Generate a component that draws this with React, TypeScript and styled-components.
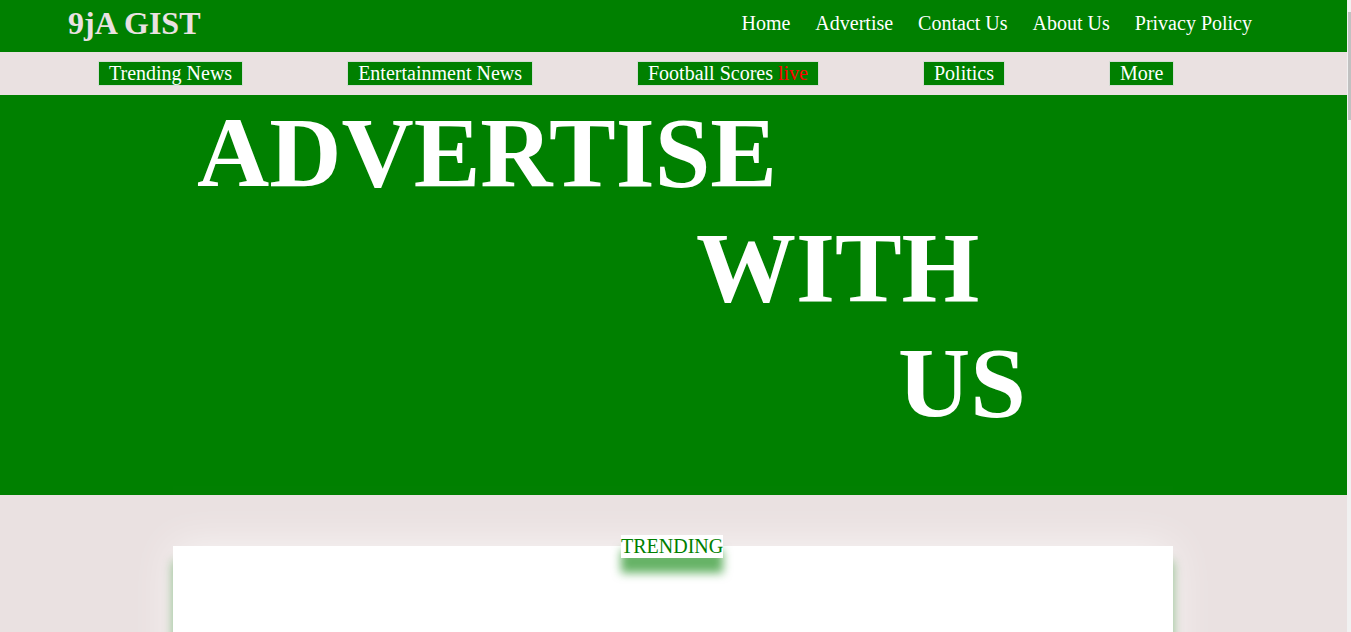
import React from "react";
import styled, { createGlobalStyle } from "styled-components";

const GREEN = "#008000";
const BLUSH = "#eae1e1";

const Global = createGlobalStyle`
  html, body {
    margin: 0;
    padding: 0;
    background: ${BLUSH};
    font-family: "Liberation Serif", "Times New Roman", serif;
  }
  #root {
    margin-right: 4px;
  }
`;

const ScrollRail = styled.div`
  position: fixed;
  top: 0;
  right: 0;
  width: 4px;
  height: 100vh;
  background: #f1f1f1;
  z-index: 10;
`;

const ScrollThumb = styled.div`
  margin: 12px 0 0 1px;
  width: 3px;
  height: 108px;
  background: #c1c1c1;
`;

const Header = styled.header`
  display: flex;
  justify-content: space-between;
  align-items: flex-start;
  height: 52px;
  padding: 0 95px 0 68px;
  background: ${GREEN};
  box-sizing: border-box;
`;

const Logo = styled.h1`
  margin: 5px 0 0;
  font-size: 32px;
  font-weight: bold;
  color: ${BLUSH};
  line-height: normal;
`;

const Nav = styled.nav`
  display: flex;
  gap: 25px;
  margin-top: 12px;
`;

const NavLink = styled.a`
  color: #fff;
  font-size: 20px;
  text-decoration: none;
  line-height: normal;
`;

const CategoryBar = styled.div`
  display: flex;
  align-items: flex-start;
  gap: 104px;
  height: 43px;
  padding: 9px 0 0 98px;
  box-sizing: border-box;
  background: ${BLUSH};
`;

const Category = styled.a`
  background: ${GREEN};
  color: #fff;
  font-size: 20px;
  line-height: normal;
  padding: 0 10px;
  border: 1px solid #d4ddd4;
  text-decoration: none;
  white-space: nowrap;
`;

const Live = styled.span`
  color: #ff0000;
`;

const Hero = styled.section`
  display: flex;
  flex-direction: column;
  height: 400px;
  background: ${GREEN};
`;

const HeroLine = styled.div<{ $indent: number }>`
  padding-left: ${(p) => p.$indent}px;
  color: #fff;
  font-size: 100px;
  font-weight: bold;
  line-height: normal;
`;

const Main = styled.main`
  display: flex;
  justify-content: center;
  padding: 51px 1px 0 0;
  background: ${BLUSH};
`;

const Card = styled.div`
  position: relative;
  width: 1000px;
  height: 3000px;
  background: #fff;
  box-shadow: 0 15px 10px rgba(0, 128, 0, 0.42), 0 0 40px rgba(255, 255, 255, 0.7);
`;

const SectionLabel = styled.div`
  position: absolute;
  top: -11px;
  left: 448px;
  background: #fff;
  color: ${GREEN};
  font-size: 20px;
  line-height: 23px;
  box-shadow: 0 15px 10px rgba(0, 128, 0, 0.6);
`;

export default function App() {
  return (
    <>
      <Global />
      <Header>
        <Logo>9jA GIST</Logo>
        <Nav>
          <NavLink href="#">Home</NavLink>
          <NavLink href="#">Advertise</NavLink>
          <NavLink href="#">Contact Us</NavLink>
          <NavLink href="#">About Us</NavLink>
          <NavLink href="#">Privacy Policy</NavLink>
        </Nav>
      </Header>
      <CategoryBar>
        <Category href="#">Trending News</Category>
        <Category href="#">Entertainment News</Category>
        <Category href="#">
          Football Scores <Live>live</Live>
        </Category>
        <Category href="#">Politics</Category>
        <Category href="#">More</Category>
      </CategoryBar>
      <Hero>
        <HeroLine $indent={197}>ADVERTISE</HeroLine>
        <HeroLine $indent={696}>WITH</HeroLine>
        <HeroLine $indent={898}>US</HeroLine>
      </Hero>
      <Main>
        <Card>
          <SectionLabel>TRENDING</SectionLabel>
        </Card>
      </Main>
      <ScrollRail>
        <ScrollThumb />
      </ScrollRail>
    </>
  );
}
